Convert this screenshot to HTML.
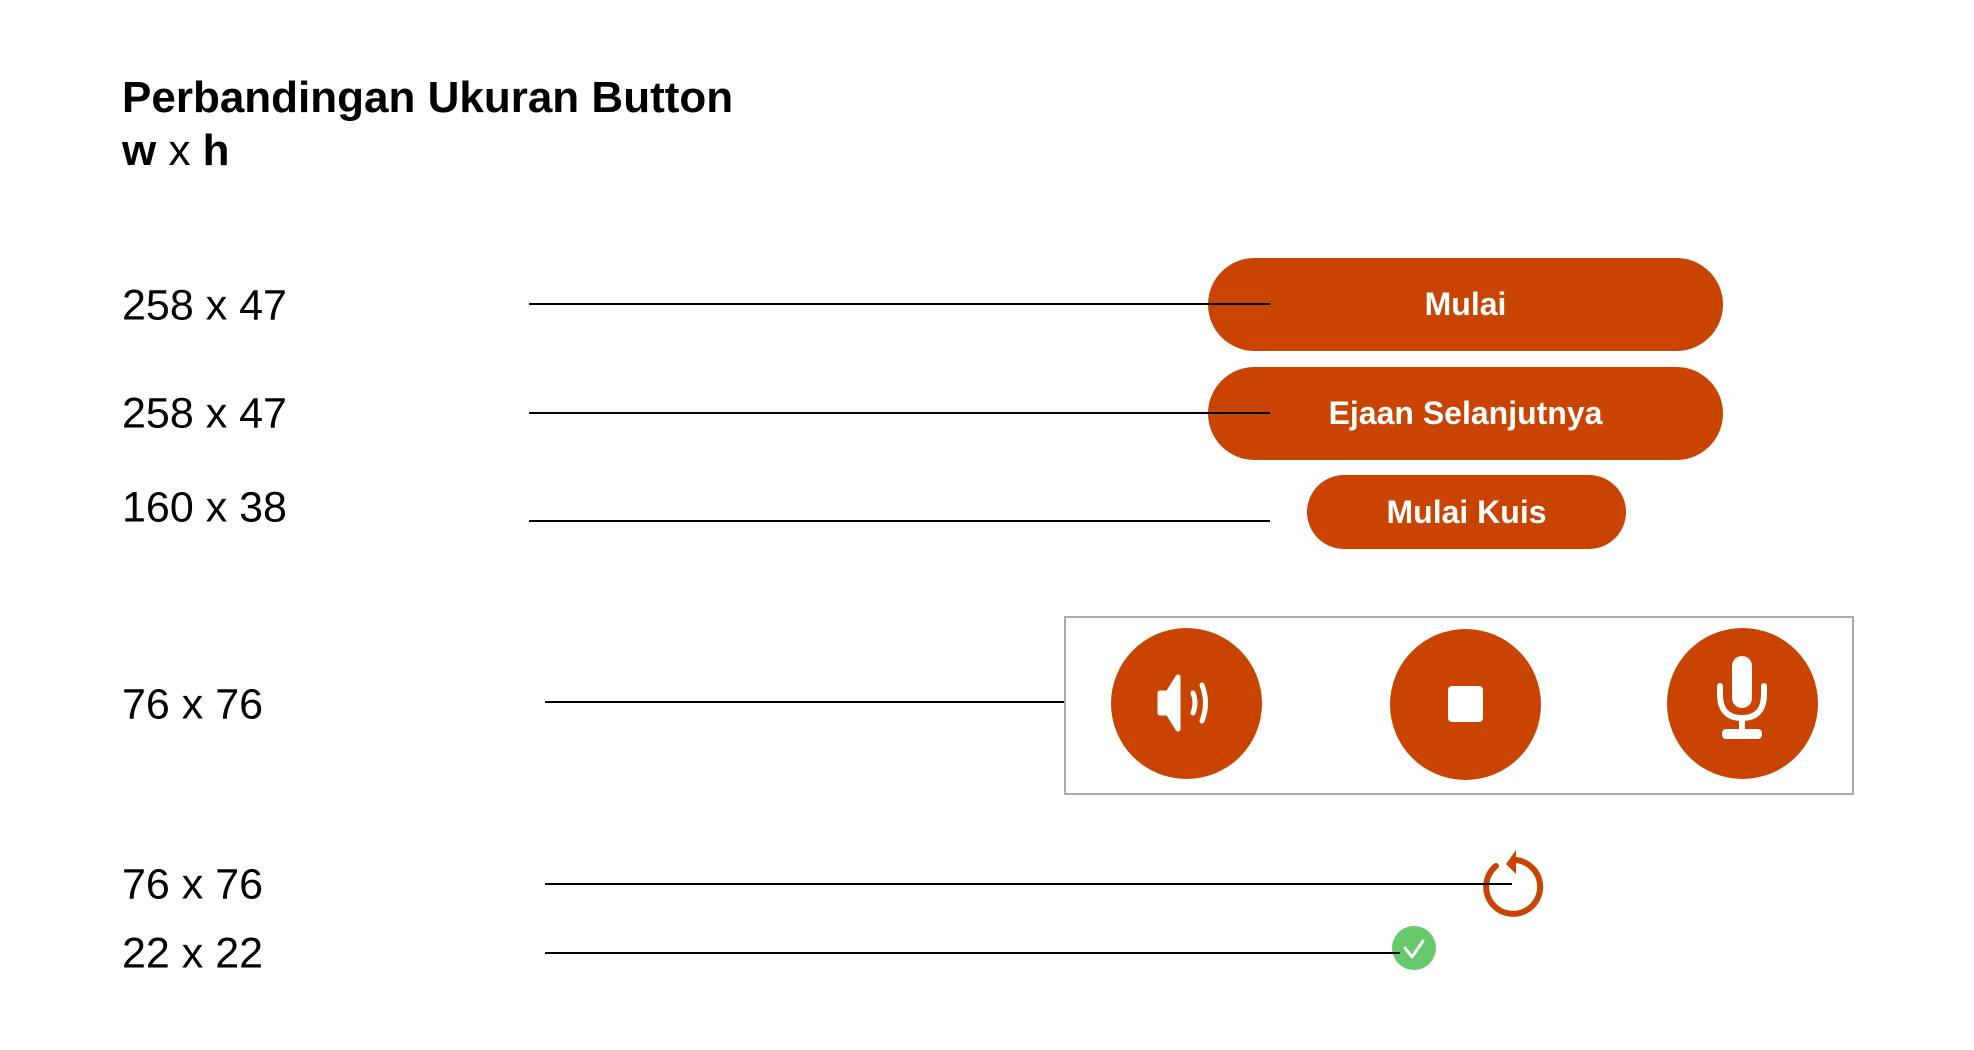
<!DOCTYPE html>
<html><head><meta charset="utf-8"><style>
body{margin:0;width:1974px;height:1050px;background:#fff;position:relative;overflow:hidden;font-family:"Liberation Sans",sans-serif;color:#000}
.a{position:absolute}
.t{left:122px;font-weight:bold;font-size:44px;line-height:1}
.l{left:122px;font-size:43px;line-height:1;transform:translateY(-50%)}
.ln{height:2px;background:#000}
.b{background:#c84400;color:#fff;font-weight:bold;font-size:32px;border-radius:60px;display:flex;align-items:center;justify-content:center}
.c{width:151px;height:151px;border-radius:50%;background:#c84400;margin:-75px 0 0 -75px}
</style></head><body>
<div class="a t" style="top:76px">Perbandingan Ukuran Button</div>
<div class="a t" style="top:129px">w <span style="font-weight:normal">x</span> h</div>

<div class="a l" style="top:306px">258 x 47</div>
<div class="a l" style="top:414px">258 x 47</div>
<div class="a l" style="top:508px">160 x 38</div>
<div class="a l" style="top:705px">76 x 76</div>
<div class="a l" style="top:885px">76 x 76</div>
<div class="a l" style="top:954px">22 x 22</div>

<div class="a b" style="left:1208px;top:258px;width:515px;height:93px">Mulai</div>
<div class="a b" style="left:1208px;top:367px;width:515px;height:93px">Ejaan Selanjutnya</div>
<div class="a b" style="left:1307px;top:475px;width:319px;height:74px">Mulai Kuis</div>

<div class="a ln" style="left:529px;width:741px;top:303px"></div>
<div class="a ln" style="left:529px;width:741px;top:412px"></div>
<div class="a ln" style="left:529px;width:741px;top:520px"></div>
<div class="a ln" style="left:545px;width:520px;top:701px"></div>

<div class="a" style="left:1064px;top:616px;width:786px;height:175px;border:2px solid #aaa"></div>
<div class="a c" style="left:1186px;top:703px"></div>
<div class="a c" style="left:1465px;top:704px"></div>
<div class="a c" style="left:1742px;top:703px"></div>
<svg class="a" style="left:1146px;top:663px" width="80" height="80" viewBox="0 0 80 80">
<path d="M14 30h8l10-16v52l-10-16h-8z" fill="#fff" stroke="#fff" stroke-width="5" stroke-linejoin="round"/>
<path d="M47 30q4 10 0 20" fill="none" stroke="#fff" stroke-width="5" stroke-linecap="round"/>
<path d="M56 22q7 18 0 36" fill="none" stroke="#fff" stroke-width="5" stroke-linecap="round"/>
</svg>
<div class="a" style="left:1448px;top:686px;width:35px;height:36px;background:#fff;border-radius:4px"></div>
<svg class="a" style="left:1702px;top:654px" width="80" height="100" viewBox="0 0 80 100">
<rect x="30" y="2" width="20" height="52" rx="10" fill="#fff"/>
<path d="M18 32v8q0 24 22 24q22 0 22-24v-8" fill="none" stroke="#fff" stroke-width="6" stroke-linecap="round"/>
<path d="M40 64v14" stroke="#fff" stroke-width="6"/>
<rect x="20" y="75" width="40" height="10" rx="4" fill="#fff"/>
</svg>

<svg class="a" style="left:1474px;top:844px" width="70" height="75" viewBox="0 0 70 75">
<path d="M22 22A27 27 0 1 0 42 16" fill="none" stroke="#c84400" stroke-width="6" stroke-linecap="round"/>
<path d="M42 6l-10 14 10 10z" fill="#c84400"/>
</svg>
<div class="a ln" style="left:545px;width:967px;top:883px"></div>

<div class="a" style="left:1392px;top:926px;width:44px;height:44px;border-radius:50%;background:#66c96b"></div>
<svg class="a" style="left:1392px;top:926px" width="44" height="44" viewBox="0 0 44 44"><path d="M13 22l7 9 11-16" fill="none" stroke="#fff" stroke-width="3" stroke-linecap="round" stroke-linejoin="round"/></svg>
<div class="a ln" style="left:545px;width:855px;top:952px"></div>
</body></html>
